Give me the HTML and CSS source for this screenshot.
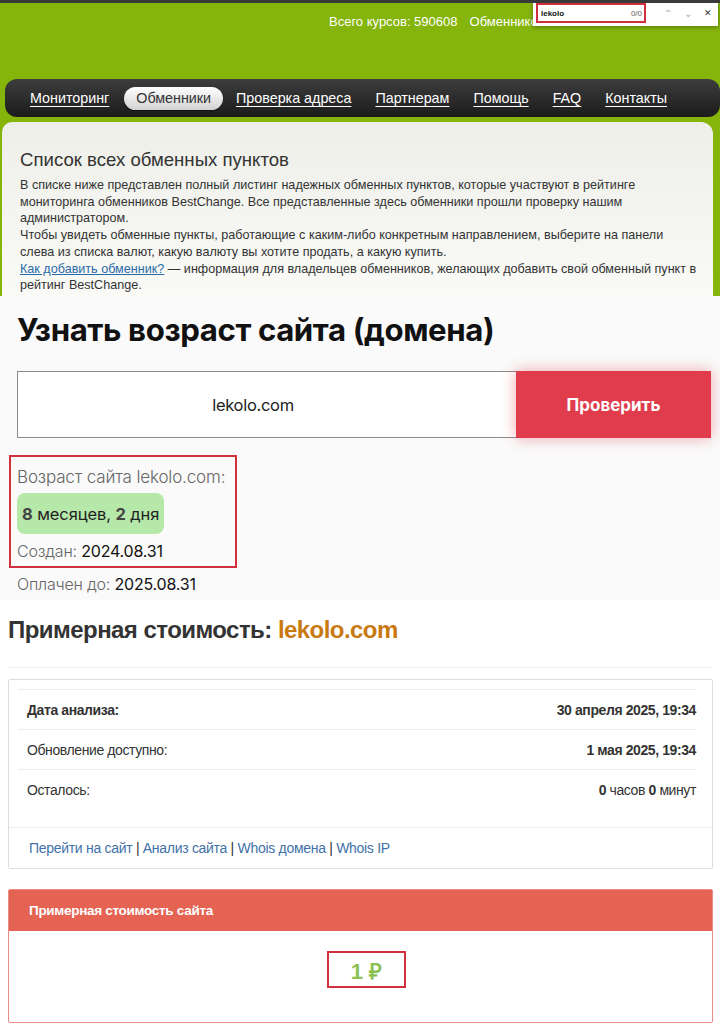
FILE: index.html
```html
<!DOCTYPE html>
<html lang="ru">
<head>
<meta charset="utf-8">
<title>BestChange / Возраст сайта</title>
<link rel="stylesheet" href="styles.css">
</head>
<body>
<section class="bc">
  <div class="bc-top">
    <div class="bc-stats"><span>Всего курсов: 590608</span><span>Обменников: 0</span></div>
  </div>
  <nav class="bc-nav">
    <a href="#">Мониторинг</a>
    <a href="#" class="active">Обменники</a>
    <a href="#">Проверка адреса</a>
    <a href="#">Партнерам</a>
    <a href="#">Помощь</a>
    <a href="#">FAQ</a>
    <a href="#">Контакты</a>
  </nav>
  <div class="bc-panel">
    <h2 class="bc-title">Список всех обменных пунктов</h2>
    <p class="bc-text">В списке ниже представлен полный листинг надежных обменных пунктов, которые участвуют в рейтинге мониторинга обменников BestChange. Все представленные здесь обменники прошли проверку нашим администратором.<br>Чтобы увидеть обменные пункты, работающие с каким-либо конкретным направлением, выберите на панели слева из списка валют, какую валюту вы хотите продать, а какую купить.<br><a href="#">Как добавить обменник?</a> — информация для владельцев обменников, желающих добавить свой обменный пункт в рейтинг BestChange.</p>
  </div>
  <div class="findbar">
    <div class="find-input"><span class="find-q">lekolo</span><span class="find-count">0/0</span></div>
    <span class="find-btn">&#8963;</span>
    <span class="find-btn">&#8964;</span>
    <span class="find-btn close">&#10005;</span>
  </div>
</section>

<section class="age">
  <h1 class="age-title">Узнать возраст сайта (домена)</h1>
  <form class="age-form">
    <div class="age-input">lekolo.com</div>
    <div class="age-btn">Проверить</div>
  </form>
  <div class="age-result">
    <div class="age-label">Возраст сайта lekolo.com:</div>
    <div class="age-pill"><b>8</b> месяцев, <b>2</b> дня</div>
    <div class="age-line">Создан: <span>2024.08.31</span></div>
  </div>
  <div class="age-line paid">Оплачен до: <span>2025.08.31</span></div>
</section>

<section class="cost">
  <h2 class="cost-title">Примерная стоимость: <span>lekolo.com</span></h2>
  <hr class="cost-hr">
  <div class="card">
    <div class="card-body">
      <div class="row"><span class="b">Дата анализа:</span><span class="b">30 апреля 2025, 19:34</span></div>
      <div class="row"><span>Обновление доступно:</span><span class="b">1 мая 2025, 19:34</span></div>
      <div class="row"><span>Осталось:</span><span><b>0</b> часов <b>0</b> минут</span></div>
    </div>
    <div class="card-foot">
      <a href="#">Перейти на сайт</a> | <a href="#">Анализ сайта</a> | <a href="#">Whois домена</a> | <a href="#">Whois IP</a>
    </div>
  </div>
  <div class="card red">
    <div class="card-head">Примерная стоимость сайта</div>
    <div class="price-wrap"><span class="price">1 ₽</span></div>
  </div>
</section>
</body>
</html>
```

FILE: styles.css
```css
* { box-sizing: border-box; }
html, body { margin: 0; padding: 0; }
body { width: 720px; height: 1024px; overflow: hidden; background: #fff; font-family: "Liberation Sans", Arial, sans-serif; }

/* ---------- BestChange block ---------- */
.bc {
  position: relative;
  height: 296px;
  background: #85b40b;
  border-top: 3px solid #3a3a3a;
  overflow: hidden;
}
.bc-top { height: 76px; display: flex; justify-content: flex-start; padding: 11px 0 0 329px; }
.bc-stats {
  display: flex; gap: 12px;
  color: #fff; font-family: "Liberation Sans", Arial, sans-serif; font-size: 13px;
  white-space: nowrap;
}
.bc-nav {
  margin: 0 0 0 5px;
  height: 38px;
  border-radius: 12px;
  background: linear-gradient(#3d3d3d, #1b1b1b);
  display: flex;
  align-items: center;
  padding-left: 14px;
}
.bc-nav a {
  color: #fff;
  font-size: 14.3px;
  font-family: "Liberation Sans", Arial, sans-serif;
  padding: 3px 11px 4px;
  margin-right: 2px;
  text-decoration: underline;
  text-underline-offset: 3px;
  white-space: nowrap;
}
.bc-nav a.active {
  color: #333;
  text-decoration: none;
  background: linear-gradient(#ffffff, #d2d2d2);
  border-radius: 13px;
  padding: 3px 12px 4px;
  margin-left: 2px;
  box-shadow: 0 1px 1px rgba(0,0,0,0.5);
}
.bc-panel {
  margin: 5px 7px 0 2px;
  height: 180px;
  background: linear-gradient(180deg, #eeefe9 0%, #fafaf7 100%);
  border-radius: 10px 12px 0 0;
  padding: 27px 0 0 18px;
}
.bc-title { margin: 0 0 6px; font-weight: normal; font-size: 18.6px; color: #333; }
.bc-text { margin: 0; font-size: 12.6px; line-height: 16.7px; color: #333; padding-right: 14px; }
.bc-text a { color: #2a6aa8; }

.findbar {
  position: absolute;
  top: -3px; left: 533px;
  width: 185px; height: 26px;
  background: #fff;
  box-shadow: 0 1px 4px rgba(0,0,0,0.35);
  display: flex; align-items: center;
  padding-left: 3px;
}
.find-input {
  width: 110px; height: 20px;
  border: 2px solid #d0303c;
  display: flex; align-items: center; justify-content: space-between;
  padding: 0 2px 0 3px;
  font-family: "Liberation Sans", Arial, sans-serif;
  font-size: 8px;
}
.find-q { color: #111; font-weight: bold; }
.find-count { color: #666; }
.find-btn { color: #aaa; font-size: 10px; width: 19px; text-align: center; margin-left: 1px; }
.find-btn:first-of-type { margin-left: 12px; }
.find-btn.close { color: #333; font-size: 9px; }

/* ---------- Age block ---------- */
.age { background: #fafafa; height: 304px; padding: 14px 0 0 17px; font-family: "Inter", "Open Sans", sans-serif; }
.age-title { margin: 0; font-size: 31.2px; font-weight: 700; line-height: 40px; color: #111; letter-spacing: -0.4px; }
.age-form { display: flex; margin-top: 21px; height: 67px; }
.age-input {
  width: 500px; height: 67px;
  background: #fff;
  border: 1px solid #8a8a8a;
  padding-right: 28px;
  display: flex; align-items: center; justify-content: center;
  font-size: 16.5px; color: #222; letter-spacing: -0.3px;
}
.age-btn {
  width: 195px; height: 67px;
  margin-left: -1px;
  background: #e03c4c;
  box-shadow: 0 0 14px rgba(224,60,76,0.45);
  color: #fff; font-weight: 700; font-size: 17px;
  display: flex; align-items: center; justify-content: center;
}
.age-result {
  width: 228px;
  margin: 17px 0 0 -8px;
  border: 2px solid #d0313c;
  padding: 9px 0 4px 6px;
}
.age-label { font-size: 17px; color: #666; line-height: 22px; font-weight: 300; letter-spacing: -0.15px; }
.age-pill {
  display: inline-block;
  margin-top: 5px;
  background: #b5e8a9;
  border-radius: 8px;
  padding: 11px 5px 10px;
  font-size: 16.5px; color: #222; letter-spacing: -0.1px;
}
.age-pill b { color: #444; }
.age-line { font-size: 16px; color: #666; line-height: 22px; margin-top: 6px; font-weight: 300; letter-spacing: -0.2px; }
.age-line span { color: #111; font-weight: 400; }
.age-line.paid { margin-top: 5px; }

/* ---------- Cost block ---------- */
.cost { background: #fff; padding: 15px 7px 0 8px; font-family: "Liberation Sans", Arial, sans-serif; }
.cost-title { margin: 0; font-size: 24px; font-weight: bold; color: #333; letter-spacing: -0.55px; line-height: 30px; }
.cost-title span { color: #c8790f; }
.cost-hr { border: 0; border-top: 1px solid #eee; margin: 22px 0 11px; }
.card { border: 1px solid #ddd; border-radius: 2px; background: #fff; }
.card-body { padding: 9px 16px 18px 9px; }
.row {
  display: flex; justify-content: space-between; align-items: center;
  height: 40px;
  border-top: 1px solid #eee;
  padding: 0 0 0 9px;
  font-size: 14px; color: #333; letter-spacing: -0.4px;
}
.row .b, .row b { font-weight: bold; }
.card-foot {
  border-top: 1px solid #eee;
  background: #fff;
  height: 41px;
  padding: 0 0 0 20px;
  display: flex; align-items: center;
  font-size: 14px; color: #333; letter-spacing: -0.3px;
  white-space: pre;
}
.card-foot a { color: #4272a8; text-decoration: none; }
.card.red { margin-top: 20px; border-color: #eb8d84; height: 134px; }
.card-head { background: #e46353; color: #fff; font-weight: bold; font-size: 13.5px; height: 41px; display: flex; align-items: center; padding-left: 20px; letter-spacing: -0.3px; }
.price-wrap { display: flex; justify-content: center; padding-top: 20px; padding-left: 12px; }
.price {
  display: inline-flex; align-items: center; justify-content: center;
  width: 79px; height: 37px;
  border: 2px solid #d0313c;
  color: #8cc152; font-size: 22px; font-weight: bold;
}
```
